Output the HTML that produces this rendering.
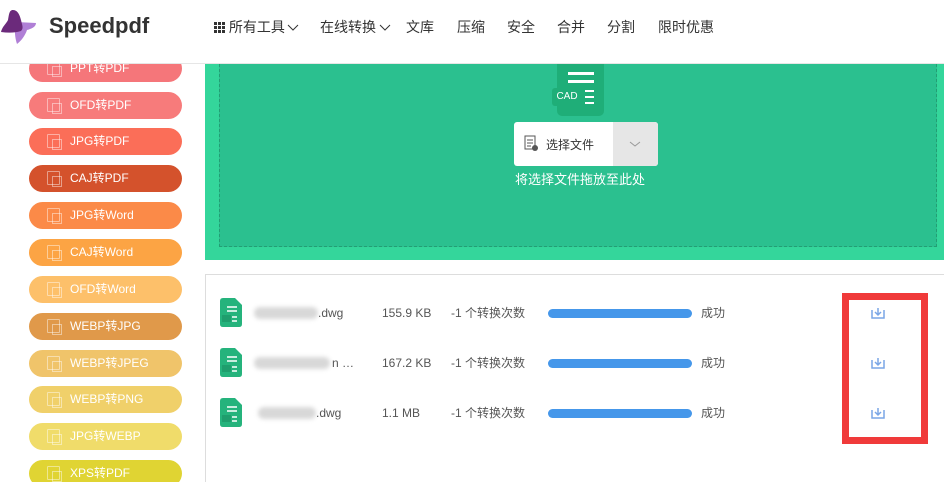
<!DOCTYPE html>
<html><head><meta charset="utf-8"><style>
*{margin:0;padding:0;box-sizing:border-box}
body{width:944px;height:482px;overflow:hidden;background:#fff;font-family:"Liberation Sans","Noto Sans CJK SC",sans-serif;position:relative;color:#333}
.hdr{position:absolute;left:0;top:0;width:944px;height:64px;background:#fff;border-bottom:1px solid #e6e6e6;z-index:5}
.logo{position:absolute;left:49px;top:13px;font-size:22px;font-weight:bold;color:#333}
.nav{position:absolute;top:17px;font-size:14px;color:#333}
.side{position:absolute;left:0;top:64px;width:205px;height:418px;overflow:hidden;background:#fff}
.btn{position:absolute;left:29px;width:153px;height:27px;border-radius:14px;color:#fff;font-size:12px;line-height:27px;padding-left:41px}
.btn i{position:absolute;left:18px;top:6px;width:13px;height:14px;border:1px solid rgba(255,255,255,.45);border-radius:1px}
.btn i:after{content:"";position:absolute;left:4px;top:4px;width:8px;height:9px;border:1px solid rgba(255,255,255,.45)}
.green{position:absolute;left:205px;top:64px;width:739px;height:196px;background:#34d69b}
.inner{position:absolute;left:14px;top:0;width:718px;height:183px;background:#2bc08f;border:1px dashed #239e74;border-top:none}
.row{position:absolute;left:220px;height:30px;font-size:12px;color:#555}
.row span{position:absolute;top:7px;white-space:nowrap;line-height:16px}
.bar{position:absolute;left:328px;top:11px;width:144px;height:9px;border-radius:5px;background:#4597ea}
.blur{position:absolute;top:9px;height:12px;background:#d8d8d8;border-radius:6px;filter:blur(2px)}
.dl{position:absolute;left:651px;top:9px}
</style></head><body>
<div class="hdr">
<svg style="position:absolute;left:0;top:0" width="45" height="50" viewBox="0 0 45 50"><path d="M16 22 L36 23 C36 27 31 29 27 30 C25 36 21 41 17 44 C15 38 14 30 16 22Z" fill="#b07fd6"/><path d="M13 10 C18 10 20 16 21 20 C22 25 24 28 21 31 C15 33 8 33 1 32 C2 27 6 24 8 20 C9 15 9 10 13 10Z" fill="#6b2a7b"/></svg>
<div class="logo">Speedpdf</div>
<div class="nav" style="left:214px"><svg width="11" height="11" style="vertical-align:-1px"><g fill="#333"><rect x="0" y="0" width="3" height="3"/><rect x="4" y="0" width="3" height="3"/><rect x="8" y="0" width="3" height="3"/><rect x="0" y="4" width="3" height="3"/><rect x="4" y="4" width="3" height="3"/><rect x="8" y="4" width="3" height="3"/><rect x="0" y="8" width="3" height="3"/><rect x="4" y="8" width="3" height="3"/><rect x="8" y="8" width="3" height="3"/></g></svg> 所有工具<svg width="12" height="8" style="margin-left:2px"><path d="M1 1 L6 6 L11 1" stroke="#333" fill="none"/></svg></div>
<div class="nav" style="left:320px">在线转换<svg width="12" height="8" style="margin-left:3px"><path d="M1 1 L6 6 L11 1" stroke="#333" fill="none"/></svg></div>
<div class="nav" style="left:406px">文库</div>
<div class="nav" style="left:457px">压缩</div>
<div class="nav" style="left:507px">安全</div>
<div class="nav" style="left:557px">合并</div>
<div class="nav" style="left:607px">分割</div>
<div class="nav" style="left:658px">限时优惠</div>
</div>
<div class="side">
<div class="btn" style="top:-9px;background:#f5767a"><i></i>PPT转PDF</div>
<div class="btn" style="top:28px;background:#f77b7b"><i></i>OFD转PDF</div>
<div class="btn" style="top:64px;background:#fb6e58"><i></i>JPG转PDF</div>
<div class="btn" style="top:101px;background:#d4522c"><i></i>CAJ转PDF</div>
<div class="btn" style="top:138px;background:#fb8a48"><i></i>JPG转Word</div>
<div class="btn" style="top:175px;background:#fca444"><i></i>CAJ转Word</div>
<div class="btn" style="top:212px;background:#fdc06a"><i></i>OFD转Word</div>
<div class="btn" style="top:249px;background:#e0994a"><i></i>WEBP转JPG</div>
<div class="btn" style="top:286px;background:#f0c46a"><i></i>WEBP转JPEG</div>
<div class="btn" style="top:322px;background:#f0d06a"><i></i>WEBP转PNG</div>
<div class="btn" style="top:359px;background:#f0dc6a"><i></i>JPG转WEBP</div>
<div class="btn" style="top:396px;background:#e0d433"><i></i>XPS转PDF</div>
</div>
<div class="green"><div class="inner"></div>
<div style="position:absolute;left:352px;top:0;width:47px;height:52px;background:#1fae78;border-radius:0 0 5px 5px"></div>
<div style="position:absolute;left:363px;top:8px;width:26px;height:3px;background:#fff"></div>
<div style="position:absolute;left:363px;top:16px;width:26px;height:3px;background:#fff"></div>
<div style="position:absolute;left:347px;top:24px;width:30px;height:18px;background:#1fae78;border-radius:3px;color:#fff;font-size:10px;line-height:18px;text-align:center">CAD</div>
<div style="position:absolute;left:380px;top:26px;width:9px;height:2px;background:#fff"></div>
<div style="position:absolute;left:380px;top:32px;width:9px;height:2px;background:#fff"></div>
<div style="position:absolute;left:380px;top:38px;width:9px;height:2px;background:#fff"></div>
<div style="position:absolute;left:309px;top:58px;width:144px;height:44px;background:#fff;border-radius:3px;overflow:hidden">
<svg style="position:absolute;left:10px;top:13px" width="14" height="17"><rect x="1" y="1" width="10" height="13" fill="none" stroke="#555"/><path d="M3 5h6M3 8h6M3 11h4" stroke="#555"/><circle cx="11" cy="13" r="3" fill="#555"/></svg>
<span style="position:absolute;left:32px;top:14px;font-size:12px;color:#333">选择文件</span>
<div style="position:absolute;left:99px;top:0;width:45px;height:44px;background:#e6e6e6"><svg style="position:absolute;left:16px;top:19px" width="12" height="7"><path d="M1 1 L6 5 L11 1" stroke="#999" fill="none"/></svg></div>
</div>
<div style="position:absolute;left:310px;top:105px;font-size:13px;color:#fff">将选择文件拖放至此处</div>
</div>
<div style="position:absolute;left:205px;top:274px;width:739px;border-top:1px solid #ddd"></div>
<div style="position:absolute;left:205px;top:274px;height:208px;border-left:1px solid #ddd"></div>
<div class="row" style="top:298px">
<svg width="22" height="29"><path d="M0 3 Q0 0 3 0 H15 L22 7 V26 Q22 29 19 29 H3 Q0 29 0 26Z" fill="#25b37c"/><path d="M7 9h10M7 13h10M12 19h5M12 23h5" stroke="#fff" stroke-width="1.5"/><rect x="2" y="17" width="9" height="7" fill="#1f9e6d"/></svg>
<div class="blur" style="left:34px;width:64px"></div><span style="left:98px">.dwg</span><span style="left:162px">155.9 KB</span><span style="left:231px">-1 个转换次数</span><div class="bar"></div><span style="left:481px">成功</span>
<svg class="dl" width="14" height="12"><path d="M1 3v8h12V3" stroke="#7aa6e6" fill="none" stroke-width="1.5"/><path d="M7 1v7M4 5l3 3 3-3" stroke="#7aa6e6" fill="none" stroke-width="1.5"/></svg></div>
<div class="row" style="top:348px">
<svg width="22" height="29"><path d="M0 3 Q0 0 3 0 H15 L22 7 V26 Q22 29 19 29 H3 Q0 29 0 26Z" fill="#25b37c"/><path d="M7 9h10M7 13h10M12 19h5M12 23h5" stroke="#fff" stroke-width="1.5"/><rect x="2" y="17" width="9" height="7" fill="#1f9e6d"/></svg>
<div class="blur" style="left:34px;width:76px"></div><span style="left:112px">n …</span><span style="left:162px">167.2 KB</span><span style="left:231px">-1 个转换次数</span><div class="bar"></div><span style="left:481px">成功</span>
<svg class="dl" width="14" height="12"><path d="M1 3v8h12V3" stroke="#7aa6e6" fill="none" stroke-width="1.5"/><path d="M7 1v7M4 5l3 3 3-3" stroke="#7aa6e6" fill="none" stroke-width="1.5"/></svg></div>
<div class="row" style="top:398px">
<svg width="22" height="29"><path d="M0 3 Q0 0 3 0 H15 L22 7 V26 Q22 29 19 29 H3 Q0 29 0 26Z" fill="#25b37c"/><path d="M7 9h10M7 13h10M12 19h5M12 23h5" stroke="#fff" stroke-width="1.5"/><rect x="2" y="17" width="9" height="7" fill="#1f9e6d"/></svg>
<div class="blur" style="left:38px;width:58px"></div><span style="left:96px">.dwg</span><span style="left:162px">1.1 MB</span><span style="left:231px">-1 个转换次数</span><div class="bar"></div><span style="left:481px">成功</span>
<svg class="dl" width="14" height="12"><path d="M1 3v8h12V3" stroke="#7aa6e6" fill="none" stroke-width="1.5"/><path d="M7 1v7M4 5l3 3 3-3" stroke="#7aa6e6" fill="none" stroke-width="1.5"/></svg></div>
<div style="position:absolute;left:842px;top:293px;width:86px;height:151px;border:7px solid #f03a3a"></div>
</body></html>
